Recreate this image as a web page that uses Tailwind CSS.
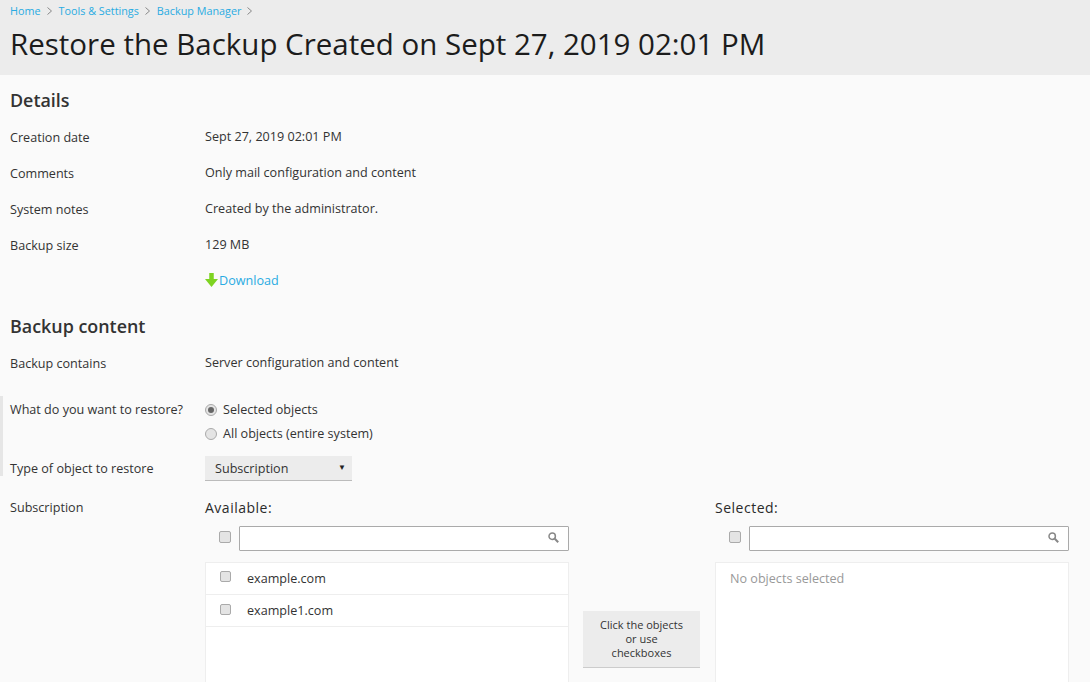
<!DOCTYPE html>
<html lang="en">

<head>
  <meta charset="UTF-8">
  <script src="https://cdn.jsdelivr.net/npm/@tailwindcss/browser@4"></script>
  <title>Restore the Backup</title>
</head>

<body class="bg-[#fafafa] font-['Open_Sans',sans-serif] text-[12.6px] text-[#333] h-[682px] overflow-hidden relative">
  <!-- page header -->
  <div class="bg-[#ececec] h-[75px] pl-[10px]">
    <div class="flex items-center h-[22px] text-[10.8px] text-[#29abe2]">
      <a>Home</a>
      <svg class="w-[5px] h-[8px] ml-[6px] mr-[7px]" viewBox="0 0 5 8" fill="none" stroke="#888"><path d="M.5.5 4.5 4 .5 7.5" /></svg>
      <a>Tools &amp; Settings</a>
      <svg class="w-[5px] h-[8px] ml-[6px] mr-[7px]" viewBox="0 0 5 8" fill="none" stroke="#888"><path d="M.5.5 4.5 4 .5 7.5" /></svg>
      <a>Backup Manager</a>
      <svg class="w-[5px] h-[8px] mx-[6px]" viewBox="0 0 5 8" fill="none" stroke="#888"><path d="M.5.5 4.5 4 .5 7.5" /></svg>
    </div>
    <h1 class="text-[29.5px] leading-[44px] text-[#1c1c1c]">Restore the Backup Created on Sept 27, 2019 02:01 PM</h1>
  </div>

  <!-- side marker -->
  <div class="absolute left-0 top-[396px] w-[3px] h-[80px] bg-[#e6e6e6]"></div>

  <div class="pl-[10px] pr-[21px]">
    <h2 class="text-[17.9px] font-semibold leading-[24px] mt-[13px] mb-[8px] text-[#333]">Details</h2>
    <div class="flex h-[36px] items-center"><div class="w-[195px]">Creation date</div><div class="-mt-[2px]">Sept 27, 2019 02:01 PM</div></div>
    <div class="flex h-[36px] items-center"><div class="w-[195px]">Comments</div><div class="-mt-[2px]">Only mail configuration and content</div></div>
    <div class="flex h-[36px] items-center"><div class="w-[195px]">System notes</div><div class="-mt-[2px]">Created by the administrator.</div></div>
    <div class="flex h-[36px] items-center"><div class="w-[195px]">Backup size</div><div class="-mt-[2px]">129 MB</div></div>
    <div class="flex h-[36px] items-center -mt-px">
      <div class="w-[195px]"></div>
      <svg class="w-[13px] h-[14px] mr-px -mt-[2px]" viewBox="0 0 13 14"><path d="M4.25 0h4.5v6H13l-6.5 8L0 6h4.25z" fill="#7ed321" /></svg>
      <a class="text-[#29abe2]">Download</a>
    </div>

    <h2 class="text-[17.9px] font-semibold leading-[24px] mt-[15px] mb-[8px] text-[#333]">Backup content</h2>
    <div class="flex h-[36px] items-center"><div class="w-[195px]">Backup contains</div><div class="-mt-[2px]">Server configuration and content</div></div>

    <div class="flex mt-[15px]">
      <div class="w-[195px] leading-[24px] pt-px">What do you want to restore?</div>
      <div class="mt-px">
        <div class="flex items-center h-[24px]">
          <span class="w-[12px] h-[12px] rounded-full border border-[#aaa] bg-[#e4e4e4] flex items-center justify-center mr-[6px]"><span class="w-[6px] h-[6px] rounded-full bg-[#666]"></span></span>
          Selected objects
        </div>
        <div class="flex items-center h-[24px]">
          <span class="w-[12px] h-[12px] rounded-full border border-[#aaa] bg-[#e4e4e4] mr-[6px]"></span>
          All objects (entire system)
        </div>
      </div>
    </div>

    <div class="flex items-center mt-[10px]">
      <div class="w-[195px] pt-[2px]">Type of object to restore</div>
      <div class="w-[147px] h-[25px] bg-[#ececec] border-b border-[#bbb] flex items-center justify-between pl-[10px] pr-[6px]">
        <span class="pt-[2px]">Subscription</span><span class="text-[8px] text-[#222] -mt-[2px]">▼</span>
      </div>
    </div>

    <div class="flex mt-[16px]">
      <div class="w-[195px] leading-[20px] pt-px">Subscription</div>
      <div class="flex">
        <!-- available -->
        <div class="w-[364px]">
          <div class="text-[14px] tracking-[0.5px] leading-[20px] pt-px -mb-px text-[#2a2a2a]">Available:</div>
          <div class="flex items-center mt-[9px]">
            <span class="w-[12px] h-[12px] ml-[14px] mr-[8px] -mt-[4px] rounded-[2px] border border-[#aaa] bg-[#e4e4e4]"></span>
            <div class="flex-1 h-[25px] bg-white border border-[#aaa] rounded-[1px] flex items-center justify-end pr-[9px]">
              <svg class="w-[11px] h-[11px] -mt-[2px]" viewBox="0 0 11 11" fill="none" stroke="#888" stroke-width="1.5"><circle cx="4.2" cy="4.2" r="3.2" /><path d="m6.8 6.8 3.4 3.4" stroke-width="2" /></svg>
            </div>
          </div>
          <div class="mt-[11px] bg-white border border-[#eee] border-b-0 h-[130px]">
            <div class="flex items-center h-[32px] border-b border-[#eee]">
              <span class="w-[11px] h-[11px] ml-[14px] mr-[16px] -mt-[4px] rounded-[2px] border border-[#aaa] bg-[#e4e4e4]"></span>
              <span class="pt-[2px]">example.com</span>
            </div>
            <div class="flex items-center h-[32px] border-b border-[#eee]">
              <span class="w-[11px] h-[11px] ml-[14px] mr-[16px] -mt-[3px] rounded-[2px] border border-[#aaa] bg-[#e4e4e4]"></span>
              <span class="pt-[2px]">example1.com</span>
            </div>
          </div>
        </div>
        <!-- hint button -->
        <div class="w-[117px] h-[57px] ml-[14px] mt-[114px] bg-[#ececec] border-b border-[#ccc] text-[11px] leading-[14px] text-center pt-[7px] text-[#333]">Click the objects<br>or use<br>checkboxes</div>
        <!-- selected -->
        <div class="w-[354px] ml-[15px]">
          <div class="text-[14px] tracking-[0.5px] leading-[20px] pt-px -mb-px text-[#2a2a2a]">Selected:</div>
          <div class="flex items-center mt-[9px]">
            <span class="w-[12px] h-[12px] ml-[14px] mr-[8px] -mt-[4px] rounded-[2px] border border-[#aaa] bg-[#e4e4e4]"></span>
            <div class="flex-1 h-[25px] bg-white border border-[#aaa] rounded-[1px] flex items-center justify-end pr-[9px]">
              <svg class="w-[11px] h-[11px] -mt-[2px]" viewBox="0 0 11 11" fill="none" stroke="#888" stroke-width="1.5"><circle cx="4.2" cy="4.2" r="3.2" /><path d="m6.8 6.8 3.4 3.4" stroke-width="2" /></svg>
            </div>
          </div>
          <div class="mt-[11px] bg-white border border-[#eee] border-b-0 h-[130px] pl-[14px] pt-[7px] text-[#999]">No objects selected</div>
        </div>
      </div>
    </div>
  </div>
</body>

</html>
